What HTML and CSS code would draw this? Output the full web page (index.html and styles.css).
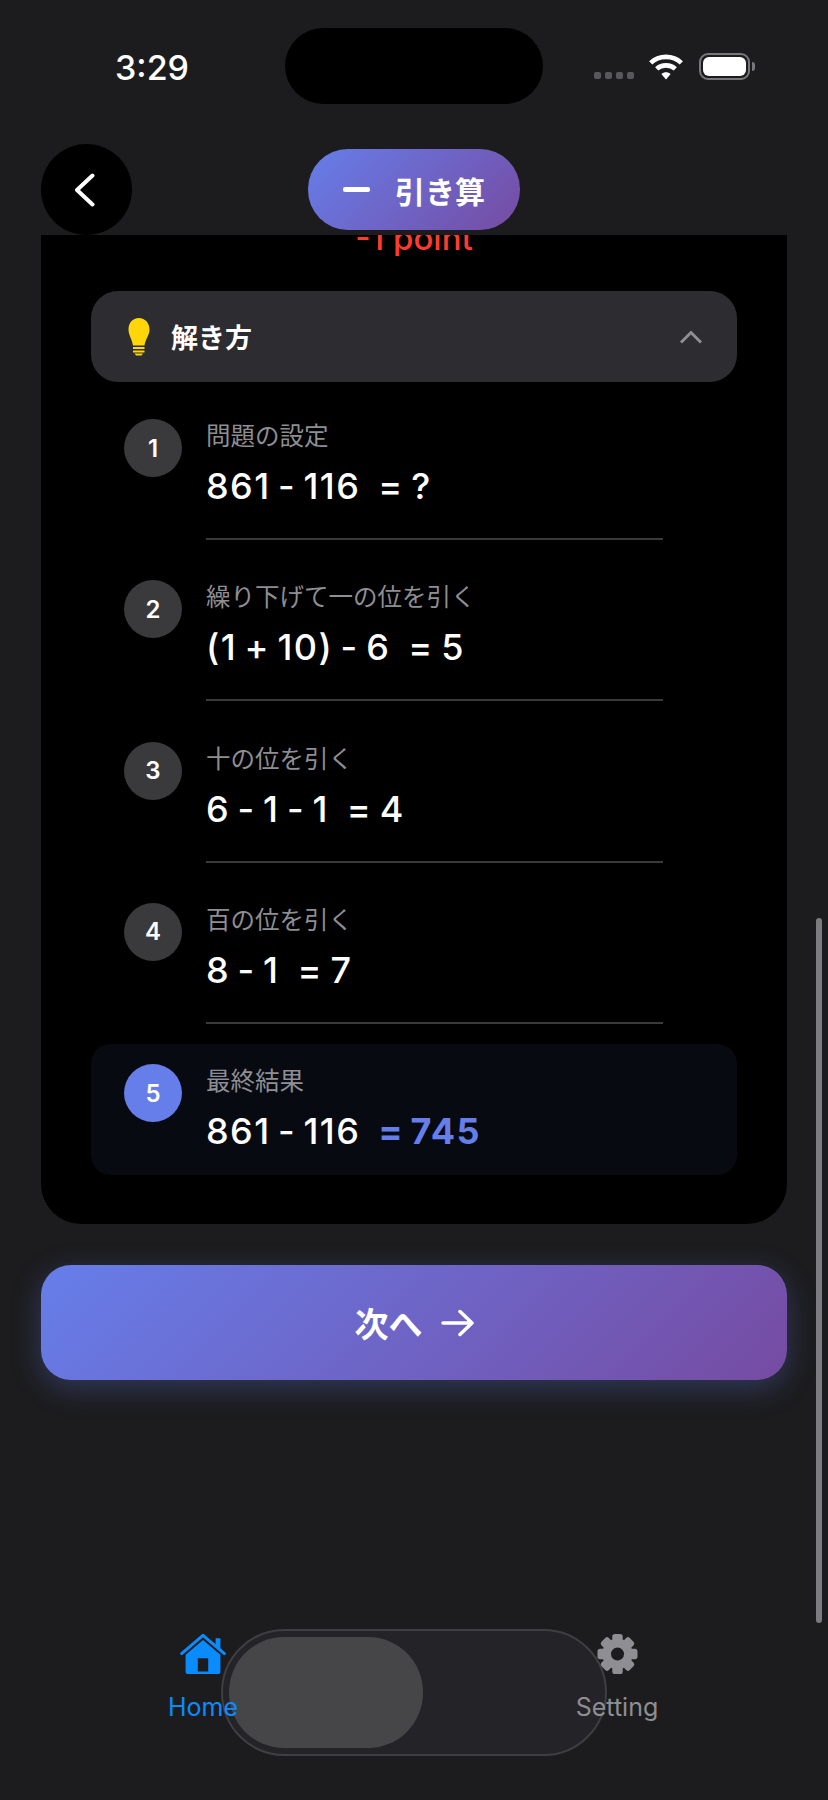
FILE: index.html
```html
<!DOCTYPE html>
<html lang="ja">
<head>
    <meta charset="UTF-8">
    <meta name="viewport" content="width=device-width, initial-scale=1.0">
    <title>引き算</title>
    <link rel="stylesheet" href="styles.css">
</head>
<body>
    <div class="status-bar">
        <span class="time">3:29</span>
        <div class="island"></div>
        <div class="status-icons">
            <div class="signal"><i></i><i></i><i></i><i></i></div>
            <svg class="wifi" width="34" height="26" viewBox="0 0 36 28">
                <path d="M1.500 9.500C10.500 1 25.500 1 34.500 9.500" fill="none" stroke="#fff" stroke-width="5"/>
                <path d="M8 16C13.500 11 22.500 11 28 16" fill="none" stroke="#fff" stroke-width="5"/>
                <path d="M13 21.500C16 19 20 19 23 21.500L18 27.500Z" fill="#fff"/>
            </svg>
            <div class="battery"><div class="battery-fill"></div></div>
            <div class="battery-tip"></div>
        </div>
    </div>

    <div class="nav">
        <button class="back-button">
            <svg width="24" height="34" viewBox="0 0 24 34">
                <path d="M17.500 2.500L2 17L17.500 31.500" fill="none" stroke="#fff" stroke-width="4" stroke-linecap="round" stroke-linejoin="round"/>
            </svg>
        </button>
        <div class="mode-pill">
            <span class="minus"></span>
            <span>引き算</span>
        </div>
    </div>

    <div class="card">
        <div class="points"><span>-1 point</span></div>

        <div class="solution-header">
            <svg class="bulb" width="22" height="38" viewBox="0 0 22 38">
                <path d="M11 0C4.500 0 0.500 5 0.500 11.500C0.500 17 4 21 5 27.500H16.500C17.500 21 21.500 17 21.500 11.500C21.500 5 17 0 11 0Z" fill="#ffd60a"/>
                <rect x="5" y="29" width="11.500" height="2" fill="#ffd60a"/>
                <rect x="5" y="32.500" width="11.500" height="2" fill="#ffd60a"/>
                <path d="M6.500 35.500H15L13.500 37.500H8Z" fill="#ffd60a"/>
            </svg>
            <span class="solution-title">解き方</span>
            <svg class="chevron" width="24" height="14" viewBox="0 0 24 14">
                <path d="M2 12.500L12 2.500L22 12.500" fill="none" stroke="#8e8e93" stroke-width="3"/>
            </svg>
        </div>

        <div class="step">
            <div class="step-number">1</div>
            <div class="step-body">
                <div class="step-label">問題の設定</div>
                <div class="step-formula">861 - 116<span class="result">= ?</span></div>
            </div>
        </div>
        <div class="step">
            <div class="step-number">2</div>
            <div class="step-body">
                <div class="step-label">繰り下げて一の位を引く</div>
                <div class="step-formula">(1 + 10) - 6<span class="result">= 5</span></div>
            </div>
        </div>
        <div class="step">
            <div class="step-number">3</div>
            <div class="step-body">
                <div class="step-label">十の位を引く</div>
                <div class="step-formula">6 - 1 - 1<span class="result">= 4</span></div>
            </div>
        </div>
        <div class="step">
            <div class="step-number">4</div>
            <div class="step-body">
                <div class="step-label">百の位を引く</div>
                <div class="step-formula">8 - 1<span class="result">= 7</span></div>
            </div>
        </div>
        <div class="step step-final">
            <div class="step-number">5</div>
            <div class="step-body">
                <div class="step-label">最終結果</div>
                <div class="step-formula">861 - 116<span class="result answer">= 745</span></div>
            </div>
        </div>
    </div>

    <button class="next-button">
        <span>次へ</span>
        <svg width="33" height="28" viewBox="0 0 33 28">
            <path d="M2 14H31M19 2.500L31 14L19 25.500" fill="none" stroke="#fff" stroke-width="3.500" stroke-linecap="round" stroke-linejoin="round"/>
        </svg>
    </button>

    <div class="tab-bar">
        <div class="tab-glass"><div class="tab-thumb"></div></div>
        <div class="tab tab-active">
            <svg width="52" height="46" viewBox="0 0 52 46">
                <path d="M1.500 22.500L26 1.500L50.500 22.500" fill="none" stroke="#0a8cff" stroke-width="3.500" stroke-linecap="round" stroke-linejoin="round"/>
                <path d="M40.500 5H46V17L40.500 13Z" fill="#0a8cff"/>
                <path d="M26 7L46 24V43C46 45 45 46 43 46H9C7 46 6 45 6 43V24ZM20 28V43H32V28Z" fill="#0a8cff" fill-rule="evenodd"/>
            </svg>
            <span>Home</span>
        </div>
        <div class="tab">
            <svg width="47" height="46" viewBox="-23.500 -23 47 46">
                <circle r="17.500" fill="#8e8e93"/>
                <rect x="-6" y="-23" width="12" height="12" rx="3" fill="#8e8e93"/>
                <rect x="-6" y="-23" width="12" height="12" rx="3" fill="#8e8e93" transform="rotate(45)"/>
                <rect x="-6" y="-23" width="12" height="12" rx="3" fill="#8e8e93" transform="rotate(90)"/>
                <rect x="-6" y="-23" width="12" height="12" rx="3" fill="#8e8e93" transform="rotate(135)"/>
                <rect x="-6" y="-23" width="12" height="12" rx="3" fill="#8e8e93" transform="rotate(180)"/>
                <rect x="-6" y="-23" width="12" height="12" rx="3" fill="#8e8e93" transform="rotate(225)"/>
                <rect x="-6" y="-23" width="12" height="12" rx="3" fill="#8e8e93" transform="rotate(270)"/>
                <rect x="-6" y="-23" width="12" height="12" rx="3" fill="#8e8e93" transform="rotate(315)"/>
                <circle r="7.500" fill="#1c1c1e"/>
            </svg>
            <span>Setting</span>
        </div>
    </div>

    <div class="scrollbar"></div>
</body>
</html>
```

FILE: styles.css
```css
* {
    box-sizing: border-box;
}
body {
    margin: 0;
    height: 1800px;
    position: relative;
    overflow: hidden;
    background-color: #1c1c1e;
    color: white;
    font-family: Inter, "Noto Sans CJK JP", sans-serif;
    display: flex;
    flex-direction: column;
}

/* status bar */
.status-bar {
    height: 144px;
    padding: 28px 0 0 115px;
    display: flex;
    align-items: flex-start;
}
.time {
    width: 170px;
    margin-top: 20px;
    font-size: 34px;
    line-height: 40px;
    font-weight: 550;
}
.island {
    width: 258px;
    height: 76px;
    border-radius: 38px;
    background-color: black;
}
.status-icons {
    margin: 25px 0 0 51px;
    display: flex;
    align-items: center;
}
.signal {
    display: flex;
    gap: 4px;
    margin: 17px 15px 0 0;
}
.signal i {
    width: 7px;
    height: 7px;
    border-radius: 2px;
    background-color: #58585c;
}
.wifi {
    margin: 1px 16px 0 0;
}
.battery {
    width: 51px;
    height: 27px;
    padding: 2px;
    border: 2px solid #77777b;
    border-radius: 9px;
}
.battery-fill {
    height: 100%;
    background-color: white;
    border-radius: 6px;
}
.battery-tip {
    width: 3px;
    height: 9px;
    margin-left: 2px;
    background-color: #77777b;
    border-radius: 0 3px 3px 0;
}

/* nav */
.nav {
    height: 91px;
    margin: 0 41px;
    display: grid;
    grid-template-columns: 91px 1fr 91px;
    align-items: center;
}
.back-button {
    width: 91px;
    height: 91px;
    padding: 0;
    border: none;
    border-radius: 50%;
    background-color: black;
    display: flex;
    align-items: center;
    justify-content: center;
}
.mode-pill {
    grid-column: 2;
    justify-self: center;
    width: 212px;
    height: 81px;
    border-radius: 40px;
    background: linear-gradient(135deg, #667eea, #764ba2);
    display: flex;
    align-items: center;
    justify-content: center;
    gap: 25px;
    font-size: 30px;
    font-weight: 600;
}
.minus {
    width: 27px;
    height: 5px;
    background-color: white;
    border-radius: 2px;
}

/* card */
.card {
    margin: 0 41px;
    height: 989px;
    padding: 0 50px;
    background-color: black;
    border-radius: 0 0 40px 40px;
    overflow: hidden;
}
.points {
    height: 21px;
    margin-bottom: 35px;
    display: flex;
    justify-content: center;
    align-items: flex-end;
    overflow: hidden;
    color: #ff3b30;
    font-size: 33px;
    line-height: 36px;
    font-weight: 500;
}
.solution-header {
    height: 91px;
    margin-bottom: 37px;
    padding: 0 34px 0 37px;
    border-radius: 27px;
    background-color: #2c2c31;
    display: flex;
    align-items: center;
}
.solution-title {
    margin-left: 21px;
    font-size: 27px;
    font-weight: 600;
    flex: 1;
}

/* steps */
.step {
    display: flex;
    gap: 24px;
    height: 161.33px;
    padding-left: 33px;
}
.step-number {
    width: 58px;
    height: 58px;
    flex-shrink: 0;
    border-radius: 50%;
    background-color: #3a3a3c;
    display: flex;
    align-items: center;
    justify-content: center;
    font-size: 24px;
    font-weight: 600;
}
.step-body {
    width: 457px;
    height: 121px;
    border-bottom: 2px solid #3a3a3c;
}
.step-label {
    margin-top: 1px;
    color: #8e8e93;
    font-size: 24.5px;
    line-height: 32px;
}
.step-formula {
    margin-top: 10px;
    font-size: 36px;
    line-height: 48px;
    font-weight: 550;
    letter-spacing: 1.4px;
    word-spacing: -3.5px;
    white-space: nowrap;
}
.result {
    margin-left: 18px;
}
.step-final {
    height: 131px;
    margin-top: -20px;
    padding-top: 20px;
    border-radius: 20px;
    background-color: #080a12;
}
.step-final .step-number {
    background-color: #667eea;
}
.step-final .step-body {
    border-bottom: none;
}
.answer {
    color: #667eea;
    font-weight: 700;
}

/* next button */
.next-button {
    height: 115px;
    margin: 41px 41px 0;
    border: none;
    border-radius: 30px;
    background: linear-gradient(135deg, #667eea, #764ba2);
    box-shadow: 0 8px 30px rgba(102, 126, 234, 0.3);
    color: white;
    font-family: inherit;
    font-size: 34px;
    font-weight: 600;
    display: flex;
    align-items: center;
    justify-content: center;
    gap: 18px;
}

/* tab bar */
.tab-bar {
    position: relative;
    margin-top: 253px;
    height: 90px;
    padding: 1px 153px 0 145px;
    display: flex;
    justify-content: space-between;
}
.tab-glass {
    position: absolute;
    left: 221px;
    top: -4px;
    width: 386px;
    height: 127px;
    padding: 6px 7px;
    border: 2px solid #3f3f42;
    border-radius: 64px;
    background-color: #232328;
}
.tab-thumb {
    width: 194px;
    height: 111px;
    margin-left: -1px;
    border-radius: 55px;
    background-color: #464648;
}
.tab {
    position: relative;
    width: 116px;
    display: flex;
    flex-direction: column;
    align-items: center;
    gap: 17px;
    color: #8e8e93;
    font-size: 25px;
    line-height: 32px;
}
.tab-active {
    color: #0a8cff;
}

.scrollbar {
    position: absolute;
    right: 6px;
    top: 918px;
    width: 6px;
    height: 705px;
    border-radius: 3px;
    background-color: #7c7c80;
}
```
